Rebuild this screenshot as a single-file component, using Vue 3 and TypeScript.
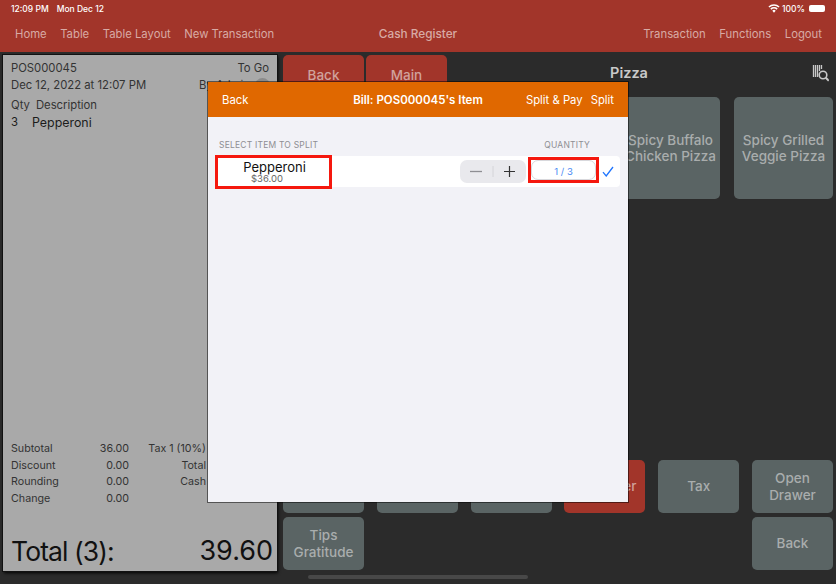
<script setup lang="ts">
const navLeft = ['Home', 'Table', 'Table Layout', 'New Transaction']
const navRight = ['Transaction', 'Functions', 'Logout']

const totals = [
  { label: 'Subtotal', value: '36.00', extra: 'Tax 1 (10%)' },
  { label: 'Discount', value: '0.00', extra: 'Total' },
  { label: 'Rounding', value: '0.00', extra: 'Cash' },
  { label: 'Change', value: '0.00', extra: '' }
]

const bottomButtons = [
  { label: '', red: false },
  { label: '', red: false },
  { label: '', red: false },
  { label: 'Customer', red: true },
  { label: 'Tax', red: false },
  { label: 'Open Drawer', red: false },
  { label: 'Tips Gratitude', red: false, first: true },
  { label: 'Back', red: false }
]
</script>

<template>
  <div class="screen">
    <header class="topbar">
      <div class="status">
        <span class="status-left"><span>12:09 PM</span><span>Mon Dec 12</span></span>
        <span class="status-right">
          <svg width="12" height="9" viewBox="0 0 13 10">
            <path d="M6.500 9.600 4.600 7.400a2.800 2.800 0 0 1 3.800 0zM3.600 6.300 2.400 5a6 6 0 0 1 8.200 0L9.400 6.300a4.300 4.300 0 0 0-5.800 0zM1.500 4 .3 2.700a9 9 0 0 1 12.400 0L11.500 4a7.300 7.300 0 0 0-10 0z" fill="#fff" />
          </svg>
          <span>100%</span>
          <span class="battery"></span>
        </span>
      </div>
      <nav class="nav">
        <div class="nav-side">
          <span v-for="item in navLeft" :key="item">{{ item }}</span>
        </div>
        <span class="nav-title">Cash Register</span>
        <div class="nav-side">
          <span v-for="item in navRight" :key="item">{{ item }}</span>
        </div>
      </nav>
    </header>

    <main class="content">
      <section class="receipt">
        <div class="line"><span>POS000045</span><span>To Go</span></div>
        <div class="line"><span>Dec 12, 2022 at 12:07 PM</span><span class="by">By Admin <i class="info"></i></span></div>
        <div class="line-head"><span>Qty</span><span>Description</span></div>
        <div class="item-line"><span class="item-qty">3</span><span>Pepperoni</span></div>

        <div class="totals">
          <template v-for="row in totals" :key="row.label">
            <span>{{ row.label }}</span>
            <span class="num">{{ row.value }}</span>
            <span class="num">{{ row.extra }}</span>
          </template>
        </div>
        <div class="grand"><span class="grand-label">Total (3):</span><span class="grand-value">39.60</span></div>
      </section>

      <section class="panel">
        <div class="panel-top">
          <button class="btn red small">Back</button>
          <button class="btn red small">Main</button>
          <h2 class="panel-title">Pizza</h2>
          <svg class="barcode" width="18" height="17" viewBox="0 0 18 17">
            <path d="M2.500 0v12M4.500 0v12M6.500 0v12M8.500 0v6M10.500 0v4" stroke="#c8c8c8" stroke-width="1.300" fill="none" />
            <circle cx="12" cy="10" r="3.800" stroke="#c8c8c8" stroke-width="1.600" fill="#2b2b2b" />
            <path d="m14.800 12.800 3 3" stroke="#c8c8c8" stroke-width="2" />
          </svg>
        </div>

        <div class="products">
          <button class="btn product col4">Spicy Buffalo Chicken Pizza</button>
          <button class="btn product">Spicy Grilled Veggie Pizza</button>
        </div>

        <div class="actions">
          <button
            v-for="(b, i) in bottomButtons"
            :key="i"
            class="btn action"
            :class="{ red: b.red, tips: b.first }"
          >{{ b.label }}</button>
        </div>
      </section>
    </main>

    <div class="home-bar"></div>

    <div class="modal">
      <div class="modal-head">
        <span>Back</span>
        <strong class="modal-title">Bill: POS000045's Item</strong>
        <span class="modal-actions"><span>Split &amp; Pay</span><span>Split</span></span>
      </div>
      <div class="modal-body">
        <div class="labels">
          <span>SELECT ITEM TO SPLIT</span>
          <span class="qty-label">QUANTITY</span>
        </div>
        <div class="split-row">
          <div class="split-item mark">
            <span class="split-name">Pepperoni</span>
            <span class="split-price">$36.00</span>
          </div>
          <div class="stepper">
            <svg width="66" height="23" viewBox="0 0 66 23">
              <path d="M10 11.500h12" stroke="#8e8e93" stroke-width="1.300" fill="none" />
              <path d="M33 6v11" stroke="#d4d4d8" stroke-width="1" fill="none" />
              <path d="M44 11.500h11M49.500 6v11" stroke="#333" stroke-width="1.200" fill="none" />
            </svg>
          </div>
          <div class="qty-box mark"><span class="qty-input">1 / 3</span></div>
          <svg class="check" width="12" height="11" viewBox="0 0 12 11">
            <path d="M1 6.200 4.200 10 11 1" stroke="#1f75fe" stroke-width="1.300" fill="none" />
          </svg>
        </div>
      </div>
    </div>
  </div>
</template>

<style>
html,
body {
  margin: 0;
  background: #2b2b2b;
}
</style>

<style scoped>
.screen {
  position: relative;
  width: 836px;
  height: 584px;
  overflow: hidden;
  display: flex;
  flex-direction: column;
  background: #2b2b2b;
  font-family: Inter, "Liberation Sans", sans-serif;
}

.topbar {
  height: 52px;
  flex: none;
  background: #a2352a;
  box-sizing: border-box;
  padding: 3px 6px 0 11px;
}

.status {
  display: flex;
  justify-content: space-between;
  align-items: center;
  height: 11px;
  color: #fff;
  font-size: 8.500px;
  font-weight: 500;
}

.status-left {
  display: flex;
  gap: 8px;
}

.status-right {
  display: flex;
  align-items: center;
  gap: 2px;
}

.battery {
  width: 16px;
  height: 7px;
  margin: 0 5px 0 2px;
  background: #fff;
  border-radius: 2px;
}

.nav {
  display: flex;
  justify-content: space-between;
  align-items: center;
  margin-top: 13px;
  padding: 0 8px 0 4px;
  color: #d8aaa4;
  font-size: 11.300px;
  height: 14px;
}

.nav-side {
  display: flex;
  gap: 13.500px;
}

.nav-title {
  position: absolute;
  left: 0;
  width: 836px;
  text-align: center;
  font-size: 11.800px;
  font-weight: 500;
}

.content {
  flex: 1;
  display: flex;
  padding: 3px 3px 13px 3px;
  gap: 6px;
  min-height: 0;
}

.receipt {
  width: 274px;
  flex: none;
  box-sizing: border-box;
  padding: 5px 4px 4px 8px;
  display: flex;
  flex-direction: column;
  background: #a9a9a9;
  box-shadow: 0 0 0 1px #111, 1px 2px 3px #000;
  color: #333;
  font-size: 11.300px;
}

.line {
  display: flex;
  justify-content: space-between;
  height: 16.500px;
  line-height: 16.500px;
  padding-right: 4px;
}

.by {
  display: flex;
  align-items: flex-start;
  gap: 5px;
  white-space: nowrap;
  margin-right: -1px;
}

.info {
  width: 15px;
  height: 15px;
  margin-top: 1px;
  border-radius: 50%;
  background: #8a8a8a;
}

.line-head {
  display: flex;
  gap: 6px;
  margin-top: 4px;
  height: 16px;
  line-height: 17px;
}

.item-line {
  display: flex;
  gap: 14px;
  color: #1c1c1c;
  font-size: 12.400px;
  height: 19px;
  line-height: 19px;
}

.item-qty {
  font-size: 11.300px;
}

.totals {
  margin-top: auto;
  display: grid;
  grid-template-columns: 72px 46px 77px;
  grid-auto-rows: 16.800px;
  line-height: 16.800px;
  font-size: 10.700px;
  white-space: nowrap;
}

.num {
  text-align: right;
}

.grand {
  display: flex;
  justify-content: space-between;
  margin-top: 27px;
  height: 32px;
  line-height: 32px;
  font-size: 26.500px;
  color: #111;
}

.grand-label {
  letter-spacing: -0.900px;
}

.grand-value {
  font-size: 27px;
}

.panel {
  flex: 1;
  min-width: 0;
  display: flex;
  flex-direction: column;
  margin-bottom: 1px;
}

.panel-top {
  display: flex;
  align-items: flex-start;
  gap: 2px;
  height: 42px;
  flex: none;
}

.panel-title {
  flex: 1;
  margin: 9px 0 0;
  text-align: center;
  color: #c9c9c9;
  font-size: 14.500px;
  font-weight: 600;
  line-height: 18px;
}

.barcode {
  flex: none;
  margin: 10px 4px 0 0;
}

.btn {
  border: 0;
  padding: 0;
  border-radius: 5px;
  font-family: inherit;
  font-weight: 500;
  font-size: 13.500px;
  line-height: 16.500px;
  color: #a9adad;
  background: #5a6464;
}

.btn.red {
  background: #a2352a;
  color: #d0a29c;
}

.btn.small {
  width: 81px;
  height: 40px;
}

.products {
  display: grid;
  grid-template-columns: repeat(5, 99px);
  column-gap: 14px;
  grid-template-rows: 102px;
  margin-left: -1px;
}

.col4 {
  grid-column: 4;
}

.actions {
  margin-top: auto;
  display: grid;
  grid-template-columns: repeat(6, 81px);
  column-gap: 12.800px;
  row-gap: 4px;
  grid-auto-rows: 53px;
}

.tips {
  grid-column: 1;
}

.tips + .action {
  grid-column: 6;
}

.home-bar {
  position: absolute;
  left: 308px;
  bottom: 5px;
  width: 220px;
  height: 4px;
  border-radius: 2px;
  background: #484848;
}

.modal {
  position: absolute;
  left: 208px;
  top: 82px;
  width: 420px;
  height: 420px;
  display: flex;
  flex-direction: column;
  background: #f2f2f7;
  box-shadow: 0 0 0 1px rgba(0, 0, 0, 0.5);
}

.modal-head {
  position: relative;
  height: 35px;
  flex: none;
  box-sizing: border-box;
  padding: 0 14px;
  display: flex;
  align-items: center;
  justify-content: space-between;
  background: #e06800;
  color: #fff;
  font-size: 11.300px;
}

.modal-title {
  position: absolute;
  left: 0;
  right: 0;
  text-align: center;
  font-weight: 600;
  font-size: 11.500px;
}

.modal-actions {
  display: flex;
  gap: 8px;
}

.modal-body {
  padding: 23px 8px 0;
}

.labels {
  display: flex;
  justify-content: space-between;
  padding: 0 30px 0 3px;
  height: 11px;
  line-height: 11px;
  color: #8e8e93;
  font-size: 8.500px;
  letter-spacing: 0.200px;
}

.split-row {
  display: flex;
  align-items: center;
  height: 31px;
  margin-top: 5px;
  background: #fff;
  border-radius: 4px;
}

.mark {
  box-sizing: border-box;
  border: 3px solid #f5180e;
}

.split-item {
  width: 117px;
  height: 34px;
  margin-left: -1px;
  padding: 0 0 0 2px;
  display: flex;
  flex-direction: column;
  align-items: center;
  justify-content: center;
  background: #fff;
}

.split-name {
  font-size: 13px;
  line-height: 14px;
  color: #111;
}

.split-price {
  margin-right: 15px;
  font-size: 9.500px;
  line-height: 10px;
  color: #666;
}

.stepper {
  width: 66px;
  height: 23px;
  margin-left: 128px;
  border-radius: 7px;
  background: #e9e9ed;
}

.stepper svg {
  display: block;
}

.qty-box {
  width: 71px;
  height: 26px;
  margin: -3px 0 0 2px;
  background: #fff;
}

.qty-input {
  display: block;
  height: 100%;
  box-sizing: border-box;
  border: 1px solid #d8d8dc;
  border-radius: 7px;
  text-align: center;
  color: #4a8af4;
  font-size: 9.500px;
  line-height: 21px;
}

.check {
  margin-left: 3px;
}
</style>
